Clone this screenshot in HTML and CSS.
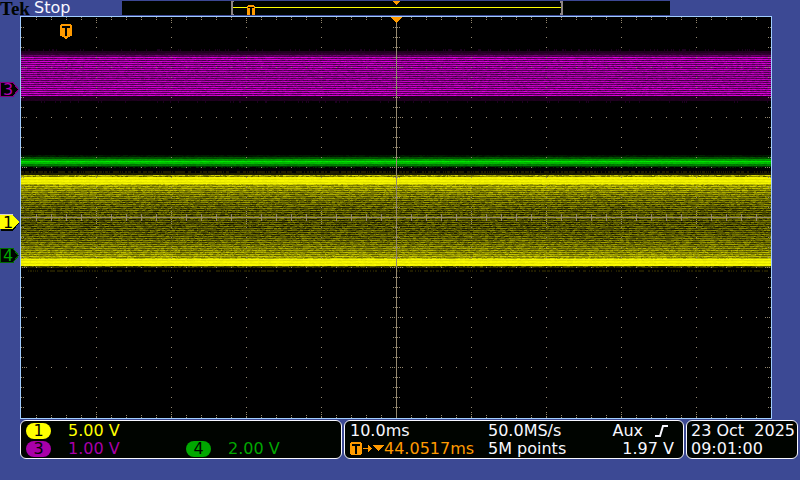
FILE: index.html
```
<!DOCTYPE html>
<html lang="en">
<head>
    <meta charset="UTF-8">
    <meta name="viewport" content="width=device-width, initial-scale=1.0">
    <title>Tek Stop</title>
    <link rel="stylesheet" href="styles.css">
</head>
<body>
    <div class="scope">
        <header class="topbar">
            <span class="logo">Tek</span>
            <span class="status">Stop</span>
            <div class="record">
                <svg viewBox="0 0 548 14" shape-rendering="crispEdges" aria-hidden="true">
                    <rect x="110" y="6" width="331" height="1" fill="#ffff00"/>
                    <path d="M109 0h3v1h-1v12h1v1h-3zM438 0h3v14h-3v-2h1V2h-1z" fill="#8c8484"/>
                    <path d="M126 4h6v1h1v9h-8V5h1z" fill="#ff9a00"/>
                    <path d="M126 6h6v1h-2v7h-2V7h-2z" fill="#000400"/>
                    <path d="M271 0h7v1h-1v1h-1v1h-1v1h-1v-1h-1v-1h-1v-1h-1z" fill="#ff9a00"/>
                </svg>
            </div>
        </header>

        <main class="display">
            <div class="markers">
                <svg viewBox="0 0 20 402" shape-rendering="crispEdges" aria-hidden="true">
                    <g class="marker-shapes">
                        <path d="M0 66.500H13L18.500 73.500L13 80.500H0z" fill="#000400" stroke="#840084"/>
                        <path d="M1 200H13L19 207L13 215H1z" fill="#000400"/>
                        <path d="M0 199H13L19 206L13 213H0z" fill="#ffff00"/>
                        <path d="M0 198h13v1H0z" fill="#d8d0c8"/>
                        <path d="M0 232.500H13L18.500 239.500L13 246.500H0z" fill="#000400" stroke="#006c00"/>
                    </g>
                    <g class="marker-text">
                        <text x="8" y="79" fill="#b400b4">3</text>
                        <text x="8" y="212" fill="#000400">1</text>
                        <text x="8" y="245" fill="#00a800">4</text>
                    </g>
                </svg>
            </div>
            <div class="plot">
                <canvas id="screen" width="750" height="401"></canvas>
            </div>
        </main>

        <footer class="readouts">
            <section class="panel channels">
                <span class="badge ch1">1</span>
                <span class="scale ch1-text">5.00 V</span>
                <span class="badge ch3">3</span>
                <span class="scale ch3-text">1.00 V</span>
                <span class="badge ch4">4</span>
                <span class="scale ch4-text">2.00 V</span>
            </section>
            <section class="panel timebase">
                <span>10.0ms</span>
                <span>50.0MS/s</span>
                <span class="trigger">Aux
                    <svg class="edge" viewBox="0 0 13 12" aria-hidden="true">
                        <path d="M0 11H5L8 1H13" fill="none" stroke="#f8f8ff" stroke-width="2"/>
                    </svg>
                </span>
                <span class="delay">
                    <svg class="delay-icon" viewBox="0 0 34 14" shape-rendering="crispEdges" aria-hidden="true">
                        <path d="M1 0h10v1h1v11h-1v1H1v-1H0V1h1z" fill="#ff9a00"/>
                        <path d="M2 2h8v2H7v8H5V4H2z" fill="#000400"/>
                        <path d="M13 6h5V3h1v1h1v1h1v1h1v1h-1v1h-1v1h-1v1h-1V7h-5z" fill="#ff9a00"/>
                        <path d="M23 3h11v1h-1v1h-1v1h-1v1h-1v1h-1v1h-1v-1h-1v-1h-1v-1h-1v-1h-1v-1h-1z" fill="#ff9a00"/>
                    </svg>44.0517ms</span>
                <span>5M points</span>
                <span class="level">1.97 V</span>
            </section>
            <section class="panel clock">
                <span>23 Oct&nbsp; 2025</span>
                <span>09:01:00</span>
            </section>
        </footer>
    </div>

    <script src="script.js"></script>
</body>
</html>
```
FILE: styles.css
```
* {
    box-sizing: border-box;
}
body {
    margin: 0;
    background-color: #3c4994;
    color: #f8f8ff;
    font-family: "DejaVu Sans", sans-serif;
    font-size: 16px;
    line-height: 18px;
}
svg, canvas {
    display: block;
}
.topbar {
    display: grid;
    grid-template-columns: 34px 88px 1fr 130px;
    height: 16px;
}
.logo {
    color: #000400;
    font-family: "Liberation Serif", serif;
    font-size: 19px;
    font-weight: bold;
    line-height: 18px;
}
.status {
    line-height: 16px;
}
.record {
    height: 14px;
    margin-top: 1px;
    background-color: #000400;
}
.record svg {
    width: 100%;
}
.display {
    display: grid;
    grid-template-columns: 20px 1fr;
    padding-right: 28px;
}
.markers svg {
    width: 20px;
}
.marker-text {
    font-size: 16px;
    text-anchor: middle;
}
.plot {
    border: 1px solid #a0ccff;
}
.plot canvas {
    width: 100%;
    image-rendering: pixelated;
}

/* readout boxes under the graticule */
.readouts {
    display: grid;
    grid-template-columns: 322fr 340fr 112fr;
    gap: 2px;
    padding: 1px 2px 0 20px;
}
.panel {
    display: grid;
    align-content: start;
    min-width: 0;
    height: 39px;
    border: 1px solid #f8f8ff;
    border-radius: 6px;
    background-color: #000400;
    white-space: nowrap;
}
.channels {
    grid-template-columns: 42px 118px 42px 1fr;
    padding: 1px 5px;
}
.timebase {
    grid-template-columns: 138px 1fr auto;
    padding: 1px 9px 1px 5px;
}
.clock {
    padding: 1px 0 1px 4px;
}
.badge {
    width: 25px;
    height: 16px;
    margin-top: 1px;
    border-radius: 8px;
    color: #000400;
    line-height: 16px;
    text-align: center;
}
.ch1 {
    grid-column: 1;
    background-color: #ffff00;
}
.ch3 {
    grid-column: 1;
    background-color: #a800a8;
}
.ch4 {
    background-color: #00a800;
}
.ch1-text {
    color: #ffff00;
}
.ch3-text {
    color: #a800a8;
}
.ch4-text {
    color: #00a800;
}
.trigger {
    display: flex;
    gap: 12px;
    padding-right: 6px;
}
.edge {
    width: 13px;
    margin-top: 3px;
    align-self: start;
}
.level {
    text-align: right;
}
.delay {
    display: flex;
    align-items: center;
    color: #ff9a00;
}
.delay-icon {
    width: 34px;
}
```
FILE: script.js
```
const canvas = document.getElementById('screen');
const ctx = canvas.getContext('2d');
const W = canvas.width;
const H = canvas.height;

// fixed seed, the noise looks the same on each load
let seed = 7;
function rand() {
    seed = (seed * 1664525 + 1013904223) % 4294967296;
    return seed / 4294967296;
}

// one row of a trace: level 0..1, noise 0..1
function traceRow(y, color, level, noise) {
    let x = 0;
    while (x < W) {
        const w = 1 + Math.floor(rand() * 3);
        const v = Math.max(0, Math.min(1, level + (rand() - 0.5) * noise));
        ctx.fillStyle = `rgb(${color.map(c => Math.round(c * v)).join(',')})`;
        ctx.fillRect(x, y, w, 1);
        x += w;
    }
}

// loose ticks of noise at the edge of a trace
function sparseRow(y, h, style, chance) {
    ctx.fillStyle = style;
    for (let x = 0; x < W; x++) {
        if (rand() < chance) ctx.fillRect(x, y, 1, h);
    }
}

function drawChannel3() {
    const color = [235, 0, 235];
    sparseRow(32, 2, '#1c0020', 0.15);
    for (let y = 34; y < 36; y++) traceRow(y, color, 0.14, 0.03);
    for (let y = 36; y < 38; y++) traceRow(y, color, 0.2, 0.06);
    traceRow(38, color, 0.42, 0.15);
    traceRow(39, color, 0.3, 0.1);
    for (let y = 40; y < 79; y++) {
        const edge = Math.abs(y - 59) / 20;
        const level = y % 2 ? 0.36 : 0.74 + edge * 0.15;
        traceRow(y, color, level, 0.18);
    }
    for (let y = 79; y < 84; y++) traceRow(y, color, 0.13, 0.03);
    sparseRow(84, 2, '#1c0020', 0.1);
}

function drawChannel4() {
    const levels = [0.1, 0.1, 0.32, 0.32, 0.62, 0.62, 0.92, 0.75, 0.75, 0.5, 0.5, 0.25];
    levels.forEach((level, i) => traceRow(138 + i, [0, 245, 0], level, 0.08));
    sparseRow(150, 1, '#002c00', 0.4);
}

function drawChannel1() {
    const color = [250, 250, 0];
    sparseRow(154, 2, '#201c00', 0.6);
    for (let y = 156; y < 158; y++) traceRow(y, color, 0.1, 0.04);
    traceRow(158, color, 0.68, 0.4);
    traceRow(159, color, 0.5, 0.4);
    for (let y = 160; y < 249; y++) {
        const edge = Math.abs(y - 204) / 44;
        let level = 0.3 + 0.48 * edge * edge;
        level += y % 2 ? 0.12 : -0.1;
        let noise = 0.26;
        if (edge > 0.86) {
            level = y % 3 ? 0.98 : 0.9;
            noise = 0.06;
        }
        traceRow(y, color, level, noise);
    }
    traceRow(249, color, 0.28, 0.3);
    traceRow(250, color, 0.18, 0.2);
    sparseRow(253, 2, '#201c00', 0.45);
}

function dot(x, y) {
    ctx.fillRect(x, y, 1, 1);
}

function drawGraticule() {
    ctx.fillStyle = '#948870';

    // 10 x 8 divisions, 75 x 50 px each
    for (let x = 15; x < W; x += 15) {
        const major = x % 75 === 0;
        for (let y = 50; y < H - 1; y += 50) dot(x, y);
        if (major) {
            for (let y = 10; y < H; y += 10) dot(x, y);
            [1, 3, 5, 395, 397, 399, 194, 196, 198, 202, 204, 206].forEach(y => dot(x, y));
        } else {
            [0, 2, 398, 400, 197, 198, 199, 201, 202, 203].forEach(y => dot(x, y));
        }
    }
    for (let y = 10; y < H - 1; y += 10) {
        if (y % 50 === 0) {
            [1, 3, 5, 744, 746, 748, 369, 371, 373, 377, 379, 381].forEach(x => dot(x, y));
        } else {
            [0, 2, 747, 749, 372, 374, 376, 378].forEach(x => dot(x, y));
        }
    }
    ctx.fillRect(375, 0, 1, H);
    ctx.fillRect(0, 200, W, 1);
}

function drawTriggerMarks() {
    ctx.fillStyle = '#ff9a00';
    for (let i = 0; i < 6; i++) ctx.fillRect(370 + i, i, 11 - i * 2, 1);

    ctx.fillRect(40, 7, 10, 1);
    ctx.fillRect(39, 8, 12, 11);
    ctx.fillRect(41, 19, 8, 1);
    ctx.fillRect(43, 20, 4, 1);
    ctx.fillRect(44, 21, 2, 1);
    ctx.fillStyle = '#000000';
    ctx.fillRect(41, 9, 8, 2);
    ctx.fillRect(44, 11, 2, 8);
}

ctx.fillStyle = '#000000';
ctx.fillRect(0, 0, W, H);
drawChannel3();
drawChannel4();
drawChannel1();
drawGraticule();
drawTriggerMarks();
```
